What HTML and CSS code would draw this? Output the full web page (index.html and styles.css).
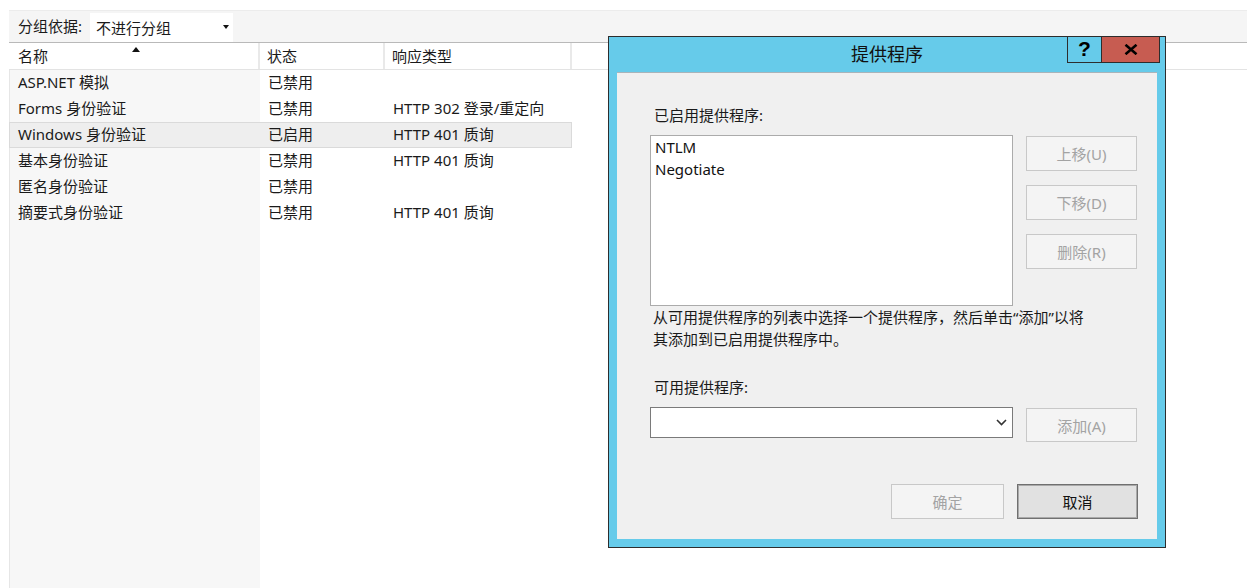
FILE: index.html
```html
<!DOCTYPE html>
<html lang="zh-CN">
<head>
<meta charset="utf-8">
<title>身份验证</title>
<link rel="stylesheet" href="styles.css">
</head>
<body>
<div class="app">
  <div class="toolbar">
    <span class="tb-label">分组依据:</span>
    <div class="tb-select"><span>不进行分组</span><i class="tri-down"></i></div>
  </div>
  <div class="grid-head">
    <div class="hc c1">名称<i class="sort-up"></i></div>
    <div class="hc c2">状态</div>
    <div class="hc c3">响应类型</div>
    <div class="hc c4"></div>
  </div>
  <div class="grid-body">
    <div class="row"><div class="cell c1">ASP.NET 模拟</div><div class="cell c2">已禁用</div><div class="cell c3"></div></div>
    <div class="row"><div class="cell c1">Forms 身份验证</div><div class="cell c2">已禁用</div><div class="cell c3">HTTP 302 登录/重定向</div></div>
    <div class="row selected"><div class="cell c1">Windows 身份验证</div><div class="cell c2">已启用</div><div class="cell c3">HTTP 401 质询</div></div>
    <div class="row"><div class="cell c1">基本身份验证</div><div class="cell c2">已禁用</div><div class="cell c3">HTTP 401 质询</div></div>
    <div class="row"><div class="cell c1">匿名身份验证</div><div class="cell c2">已禁用</div><div class="cell c3"></div></div>
    <div class="row"><div class="cell c1">摘要式身份验证</div><div class="cell c2">已禁用</div><div class="cell c3">HTTP 401 质询</div></div>
  </div>
</div>

<div class="dialog">
  <div class="titlebar">
    <div class="title">提供程序</div>
    <div class="winbtns">
      <div class="wbtn help">?</div>
      <div class="wbtn close">
        <svg width="14" height="11" viewBox="0 0 14 11"><path d="M1.5 0.8 L12.5 10.2 M12.5 0.8 L1.5 10.2" stroke="#000" stroke-width="2.6" fill="none"/></svg>
      </div>
    </div>
  </div>
  <div class="client">
    <div class="lbl">已启用提供程序:</div>
    <div class="list-row">
      <div class="listbox">
        <div class="item">NTLM</div>
        <div class="item">Negotiate</div>
      </div>
      <div class="side-btns">
        <div class="btn disabled side">上移(U)</div>
        <div class="btn disabled side">下移(D)</div>
        <div class="btn disabled side">删除(R)</div>
      </div>
    </div>
    <div class="desc">从可用提供程序的列表中选择一个提供程序，然后单击“添加”以将<br>其添加到已启用提供程序中。</div>
    <div class="lbl lbl2">可用提供程序:</div>
    <div class="add-row">
      <div class="combo">
        <svg class="chev" width="11" height="7" viewBox="0 0 11 7"><path d="M1 1 L5.5 5.5 L10 1" stroke="#333" stroke-width="1.6" fill="none"/></svg>
      </div>
      <div class="btn disabled side add">添加(A)</div>
    </div>
    <div class="footer">
      <div class="btn disabled ok">确定</div>
      <div class="btn cancel">取消</div>
    </div>
  </div>
</div>
</body>
</html>
```

FILE: styles.css
```css
* { box-sizing: border-box; }
html, body {
  margin: 0;
  padding: 0;
  width: 1247px;
  height: 588px;
  overflow: hidden;
  background: #ffffff;
  font-family: "Noto Sans", "Noto Sans CJK SC", sans-serif;
  font-size: 15px;
  color: #1a1a1a;
}

.app {
  height: 588px;
  padding: 10px 0 0 9px;
  display: flex;
  flex-direction: column;
}

/* toolbar */
.toolbar {
  height: 32px;
  flex: none;
  background: #f5f5f5;
  border-top: 1px solid #ececec;
  display: flex;
  align-items: flex-start;
}
.tb-label {
  padding-left: 9px;
  width: 81px;
  line-height: 30px;
}
.tb-select {
  margin-top: 2px;
  width: 143px;
  height: 29px;
  background: #ffffff;
  display: flex;
  align-items: center;
  padding-left: 6px;
  padding-right: 4px;
  padding-bottom: 1px;
}
.tri-down {
  margin-left: auto;
  width: 0;
  height: 0;
  border-left: 3.5px solid transparent;
  border-right: 3.5px solid transparent;
  border-top: 4px solid #111;
}

/* grid header */
.grid-head {
  flex: none;
  height: 28px;
  display: flex;
  border-top: 1px solid #b9b9b9;
  border-bottom: 1px solid #e3e3e3;
  background: #ffffff;
}
.hc {
  line-height: 26px;
  border-right: 2px solid #e9e9e9;
  position: relative;
}
.hc.c1 { width: 251px; padding-left: 9px; }
.hc.c2 { width: 125px; padding-left: 7px; }
.hc.c3 { width: 187px; padding-left: 7px; }
.hc.c4 { flex: 1; border-right: none; }
.sort-up {
  position: absolute;
  left: 123px;
  top: 4px;
  width: 0;
  height: 0;
  border-left: 4.5px solid transparent;
  border-right: 4.5px solid transparent;
  border-bottom: 5px solid #111;
}

/* grid body */
.grid-body {
  flex: 1;
  background: linear-gradient(to right, #f7f7f7 0, #f7f7f7 251px, #ffffff 251px);
  box-shadow: inset 1px 0 #e6e6e6;
}
.row {
  width: 563px;
  height: 26px;
  display: flex;
}
.row.selected {
  background: #eeeeee;
  box-shadow: inset 0 0 0 1px #dadada;
}
.cell {
  line-height: 25px;
  white-space: nowrap;
}
.cell.c1 { width: 251px; padding-left: 9px; }
.cell.c2 { width: 125px; padding-left: 8px; }
.cell.c3 { width: 187px; padding-left: 8px; }

/* dialog */
.dialog {
  position: absolute;
  left: 608px;
  top: 36px;
  width: 558px;
  height: 512px;
  border: 1px solid #2d2d2d;
  background: #66cbea;
  padding: 0 8px 8px;
  display: flex;
  flex-direction: column;
}
.titlebar {
  height: 35px;
  flex: none;
  display: grid;
  grid-template-columns: 1fr auto 1fr;
  align-items: start;
  margin: 0 -3px;
}
.title {
  grid-column: 2;
  font-size: 18px;
  line-height: 35px;
  color: #111;
}
.winbtns {
  grid-column: 3;
  justify-self: end;
  display: flex;
  margin-top: -1px;
  height: 27px;
}
.wbtn {
  height: 27px;
  border: 1px solid #2d2d2d;
  display: flex;
  align-items: center;
  justify-content: center;
}
.help {
  width: 34px;
  border-right: none;
  font-family: "Liberation Sans", sans-serif;
  font-weight: bold;
  font-size: 21px;
  line-height: 1;
  color: #000;
  padding-bottom: 2px;
}
.close {
  width: 59px;
  background: #c75c51;
}

.client {
  flex: 1;
  background: #f0f0f0;
  border-top: 1px solid #a9b4ba;
  padding: 32px 20px 0 33px;
  display: flex;
  flex-direction: column;
}
.lbl {
  line-height: 20px;
  padding-left: 4px;
  color: #1a1a1a;
}
.list-row {
  margin-top: 10px;
  display: flex;
  gap: 13px;
}
.listbox {
  width: 363px;
  height: 171px;
  background: #ffffff;
  border: 1px solid #ababab;
  padding: 0 4px;
}
.item {
  line-height: 22px;
  color: #111;
}
.side-btns {
  margin-top: 1px;
  display: flex;
  flex-direction: column;
  gap: 14px;
}
.btn {
  display: flex;
  align-items: center;
  justify-content: center;
  font-size: 15px;
}
.btn.side {
  width: 111px;
  height: 35px;
}
.btn.disabled {
  background: #f4f4f4;
  border: 1px solid #c8c8c8;
  color: #a3a3a3;
}
.desc {
  line-height: 22px;
  padding-left: 3px;
  color: #1a1a1a;
}
.lbl2 {
  margin-top: 27px;
}
.add-row {
  margin-top: 10px;
  display: flex;
  gap: 13px;
  align-items: flex-start;
}
.combo {
  width: 363px;
  height: 31px;
  background: #ffffff;
  border: 1px solid #7a7a7a;
  display: flex;
  align-items: center;
  justify-content: flex-end;
  padding-right: 5px;
}
.btn.add {
  margin-top: 1px;
  height: 34px;
}
.footer {
  margin-top: 42px;
  margin-right: -1px;
  display: flex;
  justify-content: flex-end;
  gap: 13px;
}
.btn.ok {
  width: 113px;
  height: 35px;
}
.btn.cancel {
  width: 121px;
  height: 35px;
  background: #e1e1e1;
  border: 1px solid #707070;
  box-shadow: inset 0 0 0 1px #a9a9a9;
  color: #111;
}
```
